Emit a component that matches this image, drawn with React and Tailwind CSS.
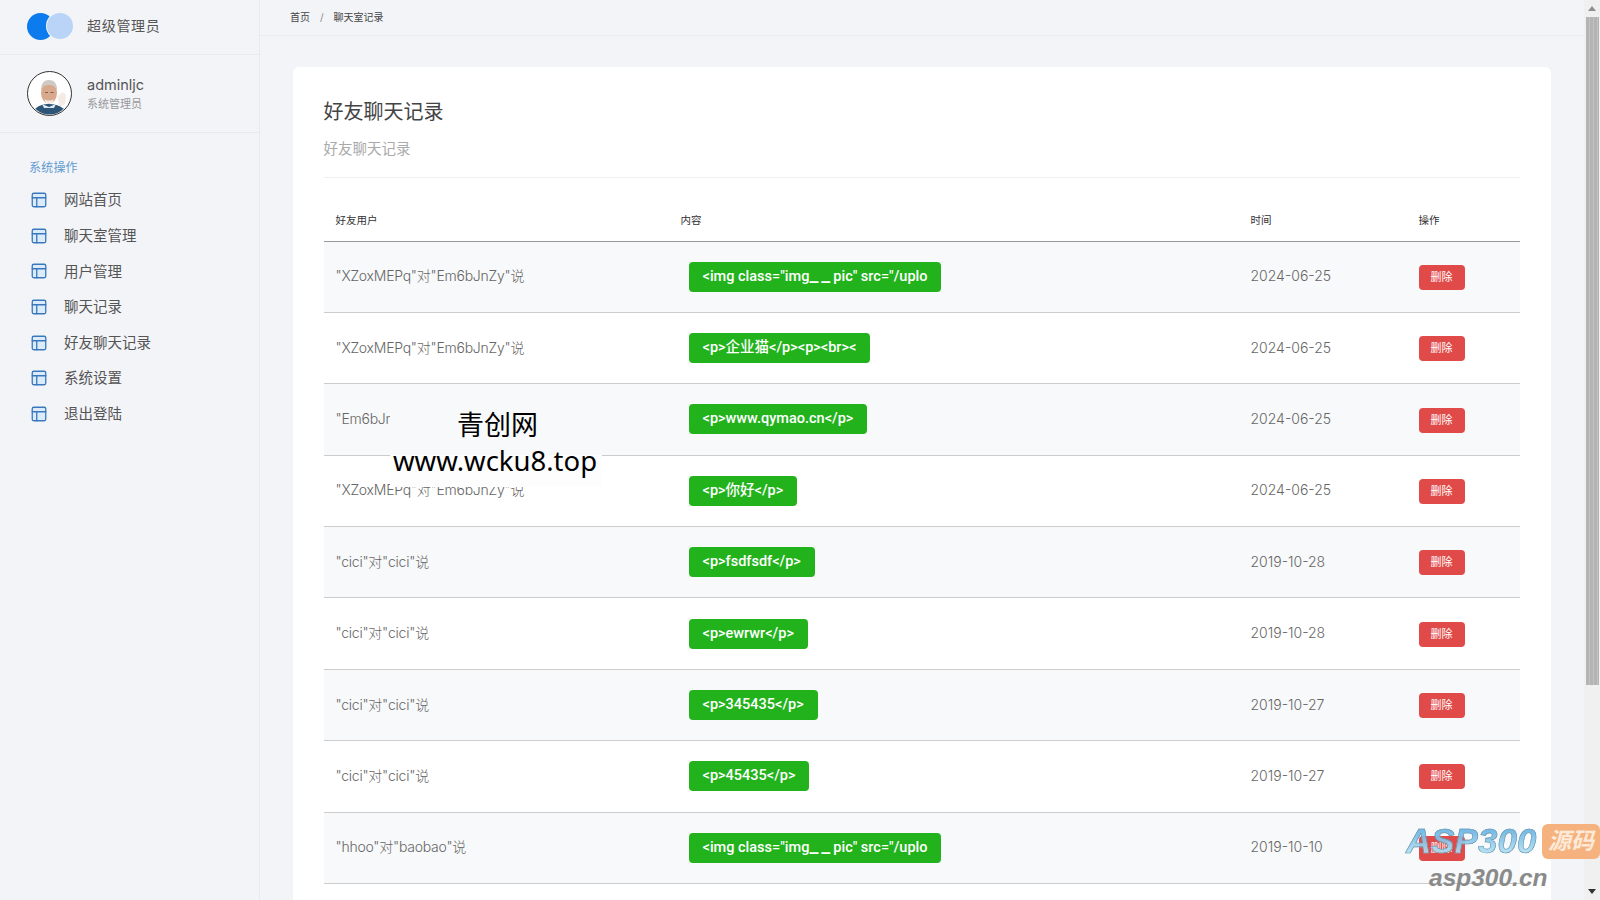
import React from "react";
import { PanelsTopLeft } from "lucide-react";

const font = { fontFamily: '"Inter", "Noto Sans CJK SC", sans-serif' };

const menu = ["网站首页", "聊天室管理", "用户管理", "聊天记录", "好友聊天记录", "系统设置", "退出登陆"];

const rows = [
  ['"XZoxMEPq"对"Em6bJnZy"说', '<img class="img__pic" src="/uplo', "2024-06-25"],
  ['"XZoxMEPq"对"Em6bJnZy"说', "<p>企业猫</p><p><br><", "2024-06-25"],
  ['"Em6bJnZy"对"XZoxMEPq"说', "<p>www.qymao.cn</p>", "2024-06-25"],
  ['"XZoxMEPq"对"Em6bJnZy"说', "<p>你好</p>", "2024-06-25"],
  ['"cici"对"cici"说', "<p>fsdfsdf</p>", "2019-10-28"],
  ['"cici"对"cici"说', "<p>ewrwr</p>", "2019-10-28"],
  ['"cici"对"cici"说', "<p>345435</p>", "2019-10-27"],
  ['"cici"对"cici"说', "<p>45435</p>", "2019-10-27"],
  ['"hhoo"对"baobao"说', '<img class="img__pic" src="/uplo', "2019-10-10"],
  ['"hhoo"对"baobao"说', "<p>hello</p>", "2019-10-10"],
];

// the underscores are wider in the picture than the font sets them
const Content = ({ text }) => {
  const parts = text.split("__");
  if (parts.length === 1) return text;
  return (
    <>
      {parts[0]}
      <span className="text-[20px] leading-none tracking-[3px]">__</span>
      {parts[1]}
    </>
  );
};

const Avatar = () => (
  <svg width="45" height="45" viewBox="0 0 45 45" className="shrink-0">
    <defs>
      <clipPath id="av">
        <circle cx="22.5" cy="22.5" r="21" />
      </clipPath>
    </defs>
    <circle cx="22.5" cy="22.5" r="22" fill="#fff" stroke="#333" strokeWidth="1" />
    <g clipPath="url(#av)">
      <path d="M31 25l5-4 3 3-1 9-6 3z" fill="#f3ebe4" />
      <path d="M8 38c4-4 9-5 14-5s10 1 15 5v7H8z" fill="#2d5578" />
      <path d="M15 33l7 3 7-3-2 4H17z" fill="#dfe8f0" />
      <ellipse cx="22" cy="22" rx="8" ry="10.500" fill="#d8a98c" />
      <path d="M14 20c-.5-8 3.500-11 8-11s8.500 3 8 11c-1-4-3.500-6-8-6s-7 2-8 6z" fill="#cfcac5" />
      <path d="M17 28c2.500 2 7.500 2 10 0l-2 4h-6z" fill="#f5eee8" />
      <path d="M18 21.500h3M23.500 21.500h3" stroke="#6b4a3a" strokeWidth=".8" />
    </g>
  </svg>
);

const Scrollbar = () => (
  <div className="w-4 shrink-0 h-full flex flex-col items-center bg-[#f0f0f0]">
    <div className="h-[17px] w-full flex items-center justify-center">
      <div className="w-0 h-0 border-x-[4px] border-x-transparent border-b-[5px] border-b-[#8f8f8f]" />
    </div>
    <div className="w-[13px] h-[668px] bg-[repeating-linear-gradient(90deg,#b4b4b4_0,#b4b4b4_3px,#c2c2c2_3px,#c2c2c2_4px)]" />
    <div className="flex-1" />
    <div className="h-[17px] w-full flex items-center justify-center">
      <div className="w-0 h-0 border-x-[4px] border-x-transparent border-t-[5px] border-t-[#333]" />
    </div>
  </div>
);

export default function App() {
  return (
    <div style={font} className="relative w-[1600px] h-[900px] overflow-hidden flex bg-[#f3f4f8] text-[#555]">
      {/* Sidebar */}
      <aside className="w-[260px] shrink-0 h-full border-r border-[#e9eaef]">
        <div className="h-[55px] flex items-center pl-[27px] pb-[2px] border-b border-[#e9eaef]">
          <div className="flex w-[46px] h-[27px] relative shrink-0">
            <span className="w-[27px] h-[27px] rounded-full bg-[#0b7bee]" />
            <span className="w-[26px] h-[26px] rounded-full bg-[#b9d4f6] -ml-[7px] ring-1 ring-[#f3f4f8]" />
          </div>
          <span className="ml-[14px] text-sm tracking-[0.7px] text-[#555]">超级管理员</span>
        </div>
        <div className="h-[78px] flex items-center pl-[27px] border-b border-[#e9eaef]">
          <Avatar />
          <div className="ml-[15px]">
            <div className="text-[14.5px] leading-5 text-[#555]">adminljc</div>
            <div className="text-[11px] leading-4 mt-[1px] text-[#999]">系统管理员</div>
          </div>
        </div>
        <div className="pl-[29px] pt-[26.5px] text-xs tracking-[0.2px] leading-4 text-[#5f9bd0]">系统操作</div>
        <nav className="mt-[7px]">
          {menu.map((m) => (
            <div key={m} className="h-[35.6px] flex items-center pl-[30px]">
              <PanelsTopLeft size={18} strokeWidth={1.75} className="text-[#3a78bd] fill-[#dcebfa]" />
              <span className="ml-4 text-[14.5px] text-[#555]">{m}</span>
            </div>
          ))}
        </nav>
      </aside>

      {/* Main */}
      <main className="flex-1 min-w-0 h-full overflow-hidden">
        <div className="h-[36px] flex items-center pl-[30px] text-[10px] text-[#444] border-b border-[#ebecf1]">
          <span>首页</span>
          <span className="mx-[10px] text-[#888]">/</span>
          <span>聊天室记录</span>
        </div>
        <div className="ml-[32.5px] mr-[33.5px] mt-[31px] bg-white rounded-md px-[31px] pt-[31px]">
          <h4 className="text-xl leading-7 text-[#444]">好友聊天记录</h4>
          <p className="mt-[13px] pb-[18px] text-[14.5px] leading-5 text-[#aaa] border-b border-[#f0f0f3]">好友聊天记录</p>
          <table className="w-full table-fixed border-collapse mt-[24px]">
            <colgroup>
              <col className="w-[345px]" />
              <col className="w-[570px]" />
              <col className="w-[168px]" />
              <col />
            </colgroup>
            <thead>
              <tr className="h-[39px] border-b border-[#999]">
                {["好友用户", "内容", "时间", "操作"].map((h) => (
                  <th key={h} className="px-3 pb-[1px] text-left text-[10.5px] font-normal text-[#333]">{h}</th>
                ))}
              </tr>
            </thead>
            <tbody>
              {rows.map((r, i) => (
                <tr key={i} className="h-[71.4px] border-b border-[#ccc] odd:bg-[#f8f9fa]">
                  <td className="px-3 pb-[1px] text-sm font-light tracking-[-0.25px] whitespace-nowrap text-[#666]">{r[0]}</td>
                  <td className="px-3">
                    <span className="inline-block align-middle ml-2 px-[14px] h-[30px] leading-[29px] rounded bg-[#22b31c] text-white text-[14.5px] font-medium whitespace-nowrap" style={{ fontFamily: '"Roboto", "Noto Sans CJK SC", sans-serif' }}>
                      <Content text={r[1]} />
                    </span>
                  </td>
                  <td className="px-3 pb-[1px] text-sm font-light text-[#666]">{r[2]}</td>
                  <td className="px-3">
                    <span className="inline-block align-middle w-[46px] h-[25px] leading-[24px] text-center rounded bg-[#e04b4a] text-white text-[11px]">删除</span>
                  </td>
                </tr>
              ))}
            </tbody>
          </table>
        </div>
      </main>
      <Scrollbar />

      {/* Watermarks */}
      <div className="absolute left-[390px] top-[407px] w-[212px] h-[80px] bg-[linear-gradient(#f8f9fa_0,#f8f9fa_48px,#fdfdfd_48px)] flex flex-col items-center text-black" style={{ fontFamily: '"Noto Sans", "Noto Sans CJK SC", sans-serif' }}>
        <span className="text-[27px] leading-[36px] ml-[3px]">青创网</span>
        <span className="text-[27.5px] leading-[35px] -ml-[2px]">www.wcku8.top</span>
      </div>
      <div className="absolute left-[1406px] top-[822px] opacity-90">
        <span className="block text-[35px] leading-[38px] font-bold italic text-transparent bg-clip-text bg-gradient-to-b from-[#4aa3dc] to-[#c7eef7] [-webkit-text-stroke:0.6px_#5d87a3]" style={{ fontFamily: '"Liberation Sans", sans-serif' }}>ASP300</span>
      </div>
      <div className="absolute left-[1542px] top-[824px] w-[58px] h-[35px] rounded-md bg-[#f6b27e] text-[#fde9d8] italic font-bold text-[23px] leading-[34px] text-center">源码</div>
      <div className="absolute left-[1429px] top-[864px] text-[24.5px] leading-[28px] font-bold italic text-[#8a8a8a]" style={{ fontFamily: '"Liberation Sans", sans-serif' }}>asp300.cn</div>
    </div>
  );
}
